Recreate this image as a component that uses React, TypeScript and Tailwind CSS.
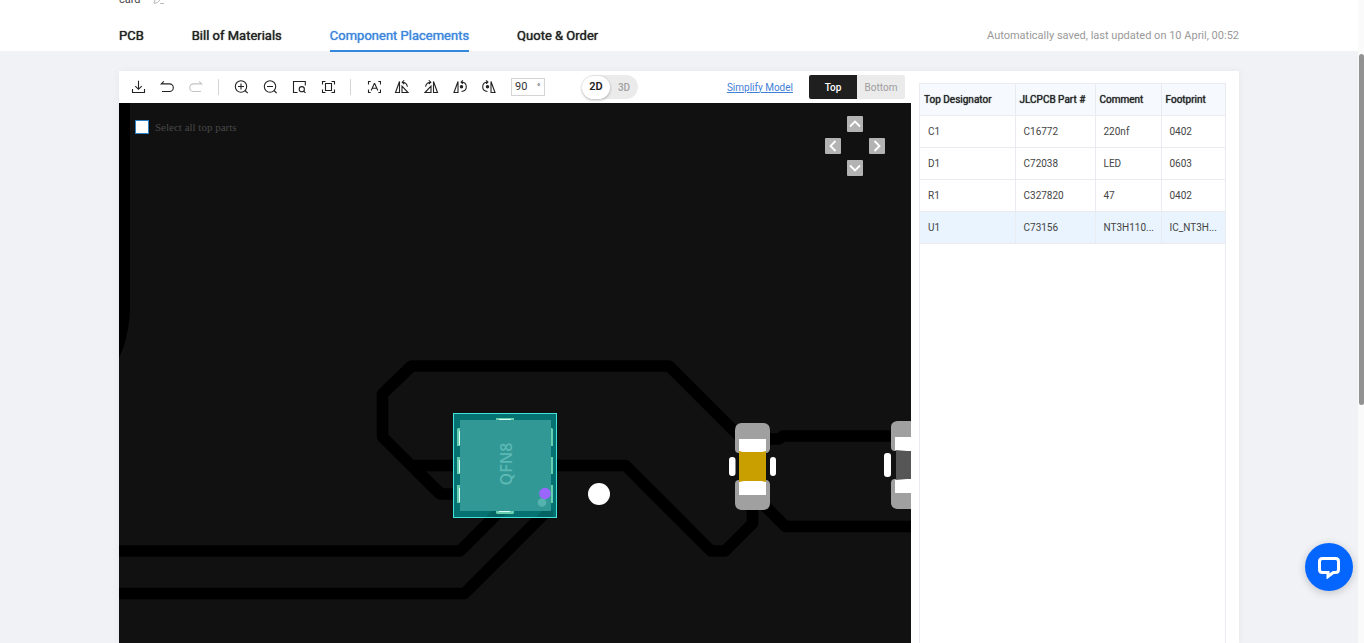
import React, { useState } from "react";

const tabs = ["PCB", "Bill of Materials", "Component Placements", "Quote & Order"];

const parts = [
  ["C1", "C16772", "220nf", "0402"],
  ["D1", "C72038", "LED", "0603"],
  ["R1", "C327820", "47", "0402"],
  ["U1", "C73156", "NT3H110...", "IC_NT3H..."],
];

function Tool({ label, muted, children }: { label: string; muted?: boolean; children: React.ReactNode }) {
  return (
    <button type="button" aria-label={label} className={muted ? "size-4 shrink-0 text-[#c4c4c4]" : "size-4 shrink-0 text-[#222222]"}>
      <svg viewBox="0 0 16 16" className="size-4" fill="none" stroke="currentColor" strokeWidth="1.1">
        {children}
      </svg>
    </button>
  );
}

function Separator() {
  return <span className="mx-px h-4 w-px shrink-0 bg-[#d5d5d5]" />;
}

function ArrowButton({ label, d, className }: { label: string; d: string; className: string }) {
  return (
    <button type="button" aria-label={label} className={`size-4 rounded-[1px] bg-[#b3b3b3] ${className}`}>
      <svg viewBox="0 0 16 16" className="size-4" fill="none" stroke="#ffffff" strokeWidth="1.8">
        <path d={d} />
      </svg>
    </button>
  );
}

function Toolbar({ side, setSide }: { side: string; setSide: (s: string) => void }) {
  return (
    <div className="flex h-8 items-center pr-1.5 pl-[11px]">
      <div className="flex items-center gap-[13px]">
        <Tool label="Download">
          <path d="M8.5 1.8v8.4M5.3 7.2l3.2 3.1 3.2-3.1M2.5 10v3.5h12V10" />
        </Tool>
        <Tool label="Undo">
          <path d="M4.8 2.4 2.3 4.9h8.2a3.8 3.8 0 0 1 0 7.6H3" />
        </Tool>
        <Tool label="Redo" muted>
          <path d="m11.2 2.4 2.5 2.5H5.5a3.8 3.8 0 0 0 0 7.6H13" />
        </Tool>
        <Separator />
        <Tool label="Zoom in">
          <circle cx="8" cy="7.5" r="5.7" />
          <path d="M8 4.5v6M5 7.5h6M12 11.5l2.7 2.7" />
        </Tool>
        <Tool label="Zoom out">
          <circle cx="8" cy="7.5" r="5.7" />
          <path d="M5 7.5h6M12 11.5l2.7 2.7" />
        </Tool>
        <Tool label="Zoom to area">
          <path d="M6.5 13.5h-4v-11h11.8v4" />
          <circle cx="10.8" cy="10.2" r="2.6" />
          <path d="m12.7 12.1 1.8 1.8" />
        </Tool>
        <Tool label="Fit to window">
          <path d="M2.5 5.5v-3h3M11.500 2.500h3v3M14.500 10.500v3h-3M5.500 13.500h-3v-3M5.500 4.500h6v7h-6z" />
        </Tool>
        <Separator />
        <Tool label="Auto align">
          <path d="M3.5 5.5v-3h2.2M13.3 2.5h2.2v3M15.5 10.5v3h-2.2M5.7 13.5H3.5v-3M6.2 11.500l3.100-7h.4l3.100 7M7.200 9.300h4.600" />
        </Tool>
        <Tool label="Rotate left">
          <path d="M5.5 2.5v11h-4zM8 7.2l6 6.3H8zM8 3.2c3.2 0 5 1.6 5.4 4.6M10.2 1.4 8.2 3.2l2 2" />
        </Tool>
        <Tool label="Rotate right">
          <path d="M10.5 2.5v11h4zM8 7.2l-6 6.3h6zM8 3.2c-3.2 0-5 1.6-5.4 4.6M5.8 1.4l2 1.8-2 2" />
        </Tool>
        <Tool label="Flip clockwise">
          <path d="M6 2.5v11H2zM9.500 3c3 .3 4.800 2 4.800 4.700s-1.800 4.500-4.800 4.800M10.900 1.400 9.100 3l1.700 1.800" />
          <circle cx="9.500" cy="7.800" r="1.200" fill="currentColor" />
        </Tool>
        <Tool label="Flip counterclockwise">
          <path d="M10 2.500v11h4zM6.500 3c-3 .3-4.800 2-4.800 4.700s1.800 4.500 4.800 4.800M5.100 1.400 6.900 3 5.200 4.800" />
          <circle cx="6.500" cy="7.800" r="1.200" fill="currentColor" />
        </Tool>
      </div>
      <label className="ml-[14px] flex h-[18px] w-[34px] shrink-0 border border-[#d4d4d4] pl-[3px]">
        <input aria-label="Rotation angle" defaultValue="90" className="w-[22px] text-[11px] leading-4 text-[#333333] outline-none" />
        <span className="text-[9px] leading-4 text-[#333333]">°</span>
      </label>
      <div className="ml-[37px] flex h-6 w-14 shrink-0 items-center rounded-full bg-[#ebebeb] text-[11px]">
        <button type="button" className="h-[23px] w-7 rounded-full bg-white font-semibold text-[#222222] shadow-[0_1px_3px_rgba(0,0,0,0.3)]">2D</button>
        <button type="button" className="h-6 w-7 text-[10px] font-medium text-[#a3a3a3]">3D</button>
      </div>
      <a href="#simplify" className="ml-auto text-[10px] text-[#3f80d8] underline">Simplify Model</a>
      <div className="ml-4 flex h-6 w-24 shrink-0 overflow-hidden rounded-xs text-[10px]">
        {["Top", "Bottom"].map((s) => (
          <button
            key={s}
            type="button"
            onClick={() => setSide(s)}
            className={side === s ? "flex-1 bg-[#1f1f1f] font-medium text-white" : "flex-1 bg-[#ebebeb] text-[#9d9d9d]"}
          >
            {s}
          </button>
        ))}
      </div>
    </div>
  );
}

function Board() {
  return (
    <svg viewBox="119 103 792 540" preserveAspectRatio="xMinYMin slice" className="block size-full" role="img" aria-label="Board view">
      <rect x="119" y="103" width="2000" height="2000" fill="#111111" />
      <path d="M119 103h11v209q-2 28-11 46z" fill="#000000" />
      <g fill="none" stroke="#000000" strokeWidth="11.5" strokeLinejoin="round">
        <path d="M742 439 669 366H411.500L382.500 394v43L440 494h20" />
        <path d="M414 465.500h45M417 471l24 23" />
        <path d="M553 465.500h72.500L711 551h14l27.500-27.500V500" />
        <path d="M765 439h14l4-3h140M762 503l23.500 23.500H920" />
        <path d="M119 551h341l52-52M119 593.500h345.500L550 508" />
      </g>

      <rect x="453.500" y="413.500" width="103" height="104" fill="#067171" stroke="#42e4dc" />
      <path d="M486 517h17l7-7h-17zM536 517h17v-7h-10z" fill="#046463" />
      <g fill="#68ceb0">
        <path d="M457 429l1-1h3v18h-4zM457 457h4v17h-4zM457 485h4v18h-4zM551 428h1l1 1v17h-2zM551 457h2v17h-2zM551 485h2v18h-2zM496 418h18v3h-18zM496 510h18v3l-1 1h-16l-1-1z" />
      </g>
      <path d="M459 431h1v14h-1zM459 460h1v13h-1zM459 488h1v14h-1zM499 419h12v1h-12zM499 511h11v1h-11z" fill="#d5fff5" />
      <rect x="460" y="420" width="91" height="91" fill="#319896" />
      <text
        transform="translate(512 464) rotate(-90)"
        textAnchor="middle"
        className="font-['Open_Sans',sans-serif] text-[16px] font-semibold"
        fill="#5db8b4"
      >
        QFN8
      </text>
      <circle cx="542" cy="502.500" r="4.300" fill="#55b3ae" />
      <circle cx="545" cy="493.500" r="5.800" fill="#9966ff" />
      <circle cx="599" cy="494" r="11" fill="#ffffff" />

      <g fill="#a0a0a0">
        <path d="M741 423h23q6 1 6 7v19q-1 4-4 4h-27q-4 0-4-4v-19q0-6 6-7z" />
        <path d="M741 510h23q6-1 6-7v-19q-1-4-4-4h-27q-4 0-4 4v19q0 6 6 7z" />
        <path d="M897 421h20v30h-22q-4 0-4-4v-20q0-5 6-6zM897 509h20v-30h-22q-4 0-4 4v20q0 5 6 6z" />
      </g>
      <rect x="739" y="451" width="27" height="31" fill="#c99f00" />
      <path d="M739 439h27v12l-4 1h-19l-4-1zM739 495h27v-13l-5-1h-17l-5 1z" fill="#ffffff" />
      <rect x="729" y="457" width="6.500" height="19" rx="3" fill="#ffffff" />
      <rect x="770" y="457" width="6" height="19" rx="3" fill="#ffffff" />
      <rect x="896" y="449" width="20" height="32" fill="#565656" />
      <path d="M895 437h20v14h-8l-12-1zM895 493h20v-14h-8l-12 1z" fill="#ffffff" />
      <rect x="884" y="453" width="7" height="24" rx="3" fill="#ffffff" />
    </svg>
  );
}

function PartsTable() {
  return (
    <div className="mt-3 mr-[13px] ml-2 w-[307px] shrink-0 border-x border-[#e9ebf0]">
      <table className="w-full table-fixed border-collapse text-left text-[10px] leading-4">
        <colgroup>
          <col className="w-[95px]" />
          <col className="w-20" />
          <col className="w-[66px]" />
          <col />
        </colgroup>
        <thead>
          <tr className="h-8 border-y border-[#e9ebf0] bg-[#f6faff] text-[#222222]">
            {["Top Designator", "JLCPCB Part #", "Comment", "Footprint"].map((h) => (
              <th
                key={h}
                scope="col"
                className="border-r border-[#e9ebf0] pl-1 font-normal whitespace-nowrap [text-shadow:0_0_1px_currentColor] last:border-r-0"
              >
                {h}
              </th>
            ))}
          </tr>
        </thead>
        <tbody>
          {parts.map((row) => (
            <tr key={row[0]} className="h-8 border-b border-[#e9ebf0] text-[#444444] last:bg-[#e9f4ff]">
              {row.map((cell, i) => (
                <td key={i} className="border-r border-[#e9ebf0] pl-2 whitespace-nowrap last:border-r-0">{cell}</td>
              ))}
            </tr>
          ))}
        </tbody>
      </table>
    </div>
  );
}

export default function App() {
  const [side, setSide] = useState("Top");
  return (
    <div className="flex h-screen overflow-hidden bg-white font-[Roboto,sans-serif]">
      <div className="flex min-w-0 flex-1 flex-col bg-[#f0f2f6]">
        <header className="h-[51px] shrink-0 bg-white">
          <div className="mx-auto flex h-full max-w-[1120px] flex-col">
            <div className="flex h-5 shrink-0 items-start gap-3">
              <span className="-mt-2 text-[11px] leading-4 text-[#444444]">card</span>
              <button type="button" aria-label="Rename" className="-mt-[7px] text-[#bdbdbd]">
                <svg viewBox="0 0 12 12" className="size-3" fill="none" stroke="currentColor">
                  <path d="M1 10.500 2 7l5-5 2.500 2.500-5 5zM7 10.500h4" />
                </svg>
              </button>
            </div>
            <div className="flex items-start justify-between">
              <nav className="flex gap-12 text-[13px] leading-8 [text-shadow:0_0_1px_currentColor]">
                {tabs.map((t) => (
                  <a
                    key={t}
                    href="#tab"
                    className={t === "Component Placements" ? "h-8 border-b-2 border-[#3388dd] text-[#3d85dc]" : "h-8 text-[#222222]"}
                  >
                    {t}
                  </a>
                ))}
              </nav>
              <p className="text-[11px] leading-8 text-[#999999]">Automatically saved, last updated on 10 April, 00:52</p>
            </div>
          </div>
        </header>

        <main className="mx-auto mt-5 flex min-h-0 w-full max-w-[1120px] flex-1 bg-white shadow-[0_0_8px_rgba(0,0,0,0.05)]">
          <section className="flex min-w-0 flex-1 flex-col">
            <Toolbar side={side} setSide={setSide} />
            <div className="relative min-h-0 flex-1 bg-[#111111]">
              <Board />
              <label className="absolute top-4 left-4 flex items-center gap-1.5 font-['Liberation_Serif',serif] text-[11px] leading-4 text-[#484848]">
                <input type="checkbox" className="size-3.5 appearance-none border border-[#2f7fc4] bg-white" />
                Select all top parts
              </label>
              <div className="absolute top-[13px] right-[26px] grid grid-cols-3 grid-rows-3 gap-1.5">
                <ArrowButton label="Move up" className="col-start-2 row-start-1" d="m3 10.500 5-5 5 5" />
                <ArrowButton label="Move left" className="col-start-1 row-start-2" d="m10.500 3-5 5 5 5" />
                <ArrowButton label="Move right" className="col-start-3 row-start-2" d="m5.500 3 5 5-5 5" />
                <ArrowButton label="Move down" className="col-start-2 row-start-3" d="m3 5.500 5 5 5-5" />
              </div>
            </div>
          </section>
          <PartsTable />
        </main>
      </div>

      <div className="flex w-1.5 shrink-0 justify-end bg-[#fafafa] pt-[54px]">
        <span className="h-[351px] w-[5px] rounded-full bg-[#929292]" />
      </div>

      <button
        type="button"
        aria-label="Open chat"
        className="fixed right-[11px] bottom-[52px] flex size-12 items-center justify-center rounded-full bg-[#0566ff] shadow-[0_2px_8px_rgba(0,0,0,0.2)]"
      >
        <svg viewBox="0 0 24 24" className="size-6" fill="none" stroke="#ffffff" strokeWidth="3">
          <path d="M5.500 3.500h13q3 0 3 3v8q0 3-3 3h-2.200L11 21.500v-4H5.500q-3 0-3-3v-8q0-3 3-3z" />
        </svg>
      </button>
    </div>
  );
}
